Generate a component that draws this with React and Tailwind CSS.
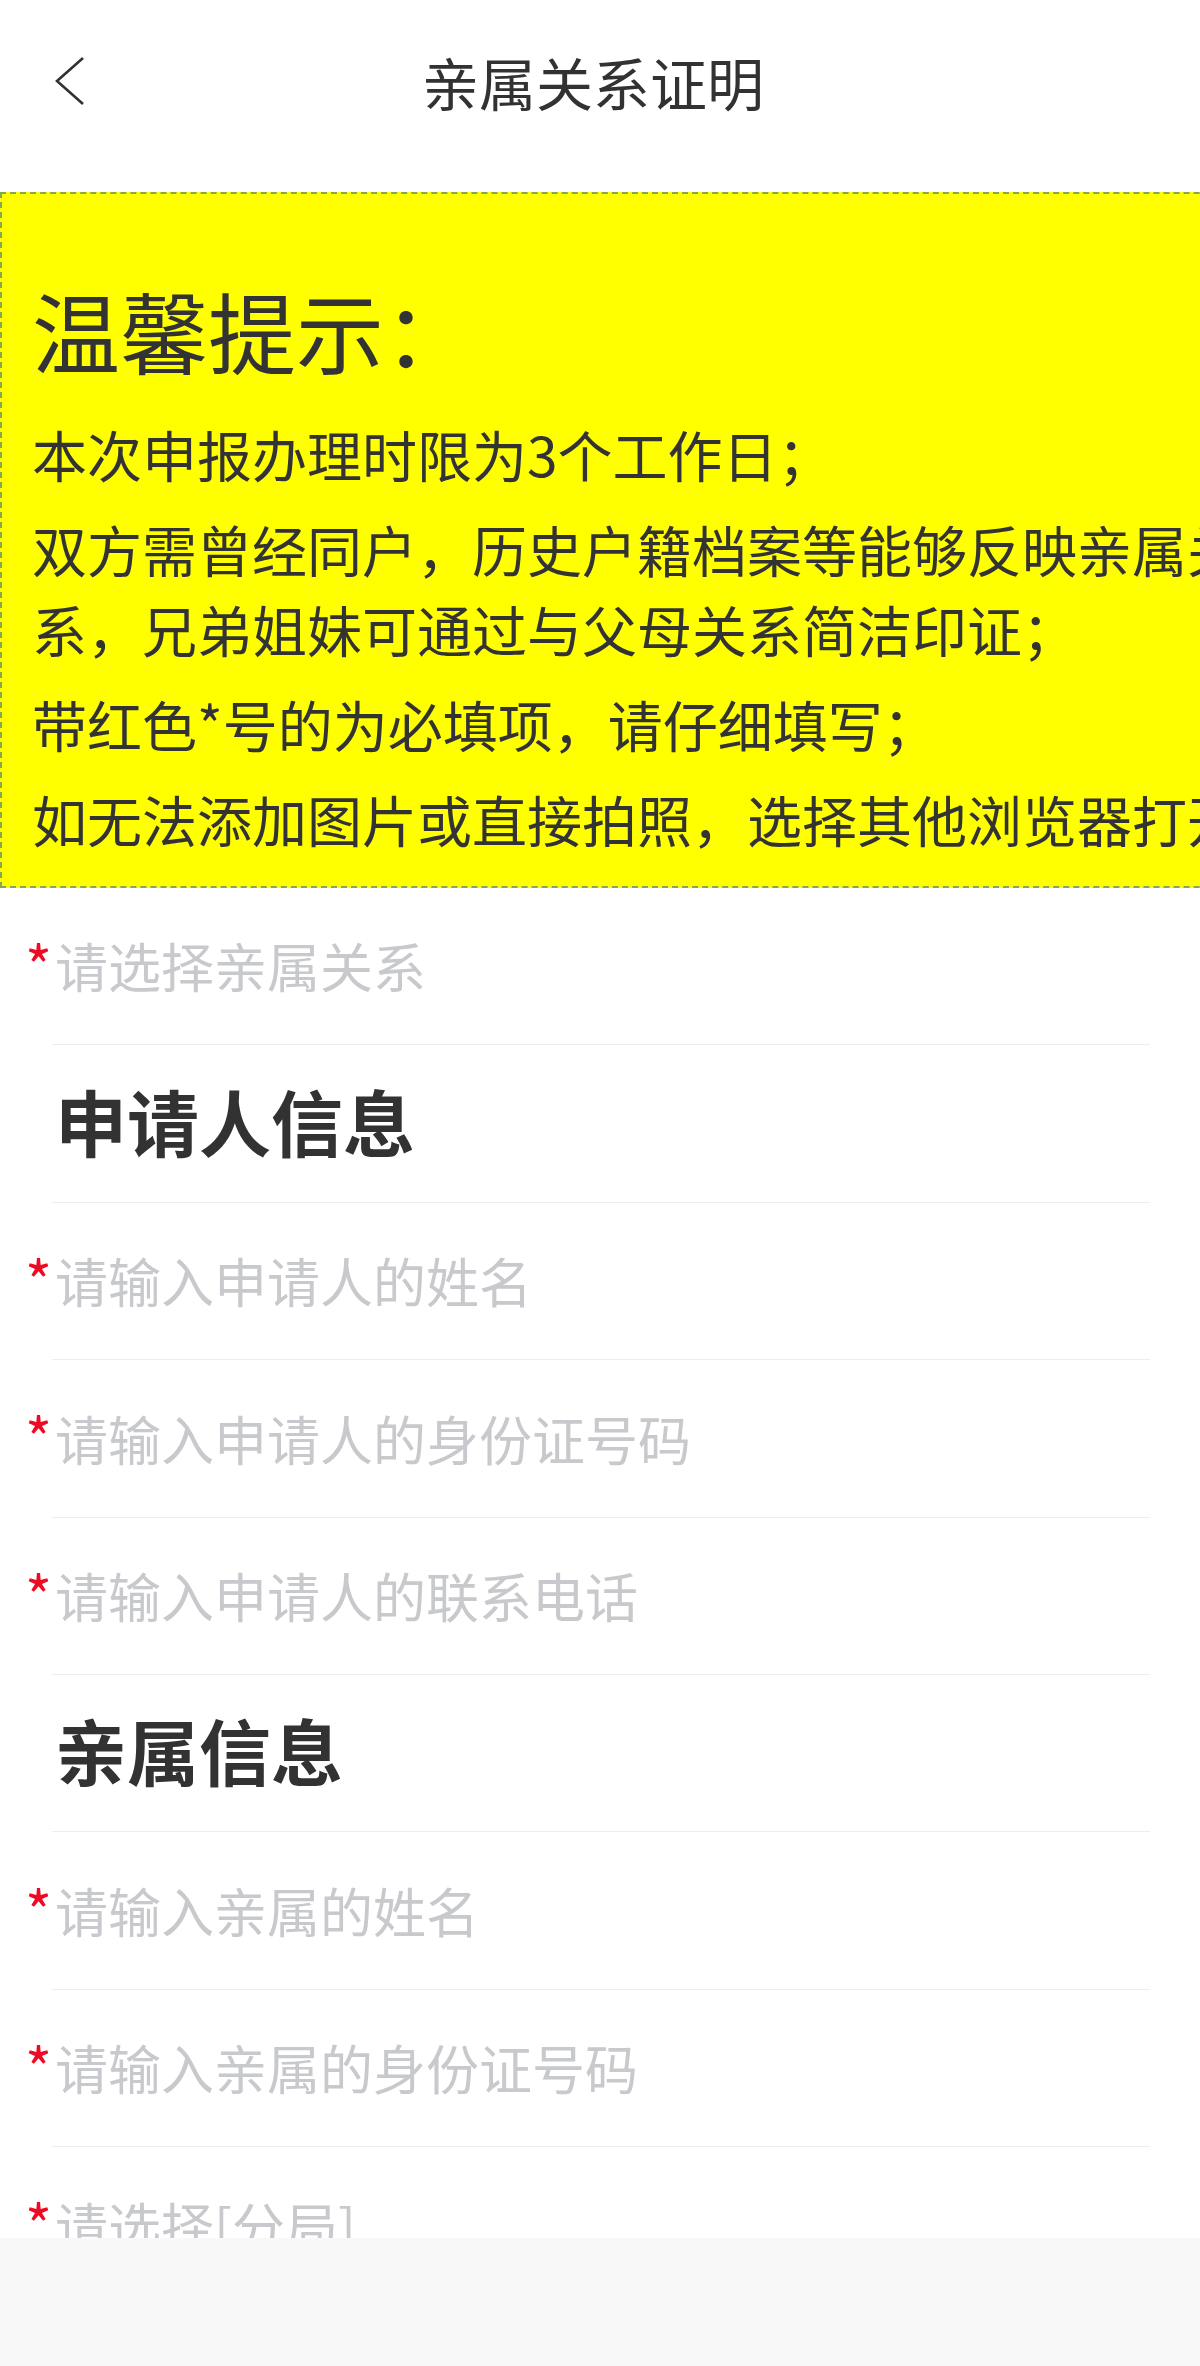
import React from "react";

const tips = [
  "本次申报办理时限为3个工作日；",
  "双方需曾经同户，历史户籍档案等能够反映亲属关系，兄弟姐妹可通过与父母关系简洁印证；",
  "带红色*号的为必填项，请仔细填写；",
  "如无法添加图片或直接拍照，选择其他浏览器打开；",
];

const Field = ({ placeholder }) => (
  <div className="ml-[52px] mr-[50px] h-[157.4px] border-b border-[#ebedf0] flex items-center pl-[3px] text-[53px]">
    <span className="-ml-[30px] w-[30px] text-[58px] leading-none -mt-[4px] text-[#ee0a24]">*</span>
    <span className="text-[#c8c9cc]">{placeholder}</span>
  </div>
);

const Section = ({ title }) => (
  <div className="ml-[52px] mr-[50px] h-[157.4px] border-b border-[#ebedf0] flex items-center pl-[3px] pb-[8px]">
    <h3 className="text-[72px] font-bold text-[#323233]">{title}</h3>
  </div>
);

const App = () => {
  return (
    <div className="w-[1200px] h-[2366px] flex flex-col overflow-hidden bg-white font-['Noto_Sans_CJK_SC','Noto_Sans',sans-serif]">
      {/* nav bar */}
      <header className="h-[168px] shrink-0 flex items-center pb-[6px]">
        <div className="w-[120px] pl-[54px] flex items-center">
          <svg width="32" height="50" viewBox="0 0 32 50" fill="none">
            <path d="M29 2 L3 25 L29 48" stroke="#323233" strokeWidth="2.6" strokeLinejoin="miter" />
          </svg>
        </div>
        <h1 className="flex-1 text-center text-[57px] leading-none text-[#323233]">亲属关系证明</h1>
        <div className="w-[134px]" />
      </header>

      <main className="flex-1 overflow-hidden">
        {/* notice */}
        <div className="mt-[24px] w-[1330px] bg-[#ffff00] border-2 border-dashed border-[#86a850] pt-[85px] pb-[28px] pl-[30px] text-[#333333]">
          <h2 className="text-[88px] leading-[100px]">温馨提示：</h2>
          <div className="mt-[34px] w-[1265px] flex flex-col gap-[15px]">
            {tips.map((t) => (
              <p key={t} className="text-[55px] leading-[80px]">{t}</p>
            ))}
          </div>
        </div>

        {/* form */}
        <Field placeholder="请选择亲属关系" />
        <Section title="申请人信息" />
        <Field placeholder="请输入申请人的姓名" />
        <Field placeholder="请输入申请人的身份证号码" />
        <Field placeholder="请输入申请人的联系电话" />
        <Section title="亲属信息" />
        <Field placeholder="请输入亲属的姓名" />
        <Field placeholder="请输入亲属的身份证号码" />
        <Field placeholder="请选择[分局]" />
      </main>

      <footer className="h-[128px] shrink-0 bg-[#f8f8f8]" />
    </div>
  );
};

export default App;
